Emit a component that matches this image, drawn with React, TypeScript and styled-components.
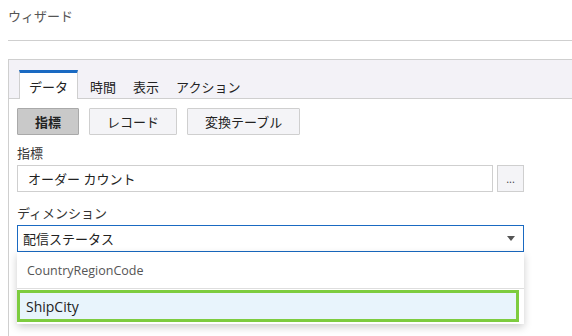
import React, { useState } from "react";
import styled, { createGlobalStyle } from "styled-components";

const GlobalStyle = createGlobalStyle`
  body {
    margin: 0;
    background: #fff;
    font-family: "Open Sans", "Noto Sans CJK JP", sans-serif;
    color: #333;
  }
`;

const Page = styled.div`
  padding: 0 0 0 8px;
  height: 336px;
  overflow: hidden;
`;

const Title = styled.div`
  height: 41px;
  padding-top: 6px;
  box-sizing: border-box;
  font-size: 13px;
  color: #555;
  border-bottom: 1px solid #cfcfcf;
`;

const Panel = styled.div`
  margin-top: 18px;
  border-top: 1px solid #cfcfcf;
  border-left: 1px solid #cfcfcf;
  height: 300px;
`;

const TabBar = styled.div`
  display: flex;
  align-items: flex-end;
  height: 38px;
  padding-left: 10px;
  background: #f3f2f7;
  border-bottom: 1px solid #cfcfcf;
`;

const Tab = styled.div<{ $active?: boolean }>`
  display: flex;
  align-items: center;
  box-sizing: border-box;
  height: 29px;
  margin-bottom: -1px;
  padding: 0 ${(p) => (p.$active ? "9px" : "7px")};
  font-size: 13px;
  color: #222;
  border-top: 3px solid ${(p) => (p.$active ? "#1a6ac2" : "transparent")};
  border-left: 1px solid ${(p) => (p.$active ? "#cfcfcf" : "transparent")};
  border-right: 1px solid ${(p) => (p.$active ? "#cfcfcf" : "transparent")};
  background: ${(p) => (p.$active ? "#fff" : "transparent")};
  margin-right: ${(p) => (p.$active ? "4px" : "1px")};
`;

const Content = styled.div`
  width: 507px;
  padding: 9px 0 0 8px;
`;

const ButtonRow = styled.div`
  display: flex;
  gap: 10px;
`;

const ToggleButton = styled.button<{ $pressed?: boolean }>`
  height: 27px;
  padding: 0 17px;
  font-family: inherit;
  font-size: 13px;
  font-weight: ${(p) => (p.$pressed ? 700 : 400)};
  color: #222;
  border: 1px solid ${(p) => (p.$pressed ? "#a9a9a9" : "#cfcfcf")};
  background: ${(p) => (p.$pressed ? "#c9c9c9" : "#f4f4f7")};
  border-radius: 1px;
`;

const Label = styled.div<{ $gap?: number }>`
  margin-top: ${(p) => p.$gap ?? 8}px;
  margin-bottom: 3px;
  font-size: 13px;
  color: #333;
`;

const FieldRow = styled.div`
  display: flex;
  gap: 4px;
`;

const TextBox = styled.div`
  flex: 1;
  height: 27px;
  box-sizing: border-box;
  display: flex;
  align-items: center;
  padding: 0 10px;
  font-size: 13px;
  color: #222;
  border: 1px solid #cfcfcf;
`;

const MoreButton = styled.button`
  width: 27px;
  height: 27px;
  font-family: inherit;
  font-size: 11px;
  color: #444;
  border: 1px solid #cfcfcf;
  background: #f4f4f7;
  padding: 0;
  line-height: 1;
`;

const SelectWrap = styled.div`
  position: relative;
`;

const SelectBox = styled.div`
  height: 27px;
  box-sizing: border-box;
  display: flex;
  align-items: center;
  justify-content: space-between;
  padding: 0 8px 0 5px;
  font-size: 13px;
  color: #222;
  border: 1px solid #1a6ac2;
`;

const Caret = styled.span`
  width: 0;
  height: 0;
  border-left: 4px solid transparent;
  border-right: 4px solid transparent;
  border-top: 5px solid #555;
`;

const Menu = styled.ul`
  position: absolute;
  top: 27px;
  left: 0;
  right: 0;
  margin: 0;
  padding: 0;
  list-style: none;
  background: #fff;
  box-shadow: 0 3px 8px rgba(0, 0, 0, 0.2);
`;

const Option = styled.li<{ $selected?: boolean }>`
  box-sizing: border-box;
  display: flex;
  align-items: center;
  height: ${(p) => (p.$selected ? "32px" : "37px")};
  padding: 0 ${(p) => (p.$selected ? "9px" : "10px")};
  font-size: ${(p) => (p.$selected ? "14px" : "12.5px")};
  color: ${(p) => (p.$selected ? "#222" : "#555")};
  background: ${(p) => (p.$selected ? "#e8f4fc" : "#fff")};
  border-bottom: ${(p) => (p.$selected ? "none" : "1px solid #dedede")};
  outline: ${(p) => (p.$selected ? "3px solid #7dcc3f" : "none")};
  outline-offset: -3px;
  margin: ${(p) => (p.$selected ? "1px 5px 2px 0" : "0")};
`;

const tabs = ["データ", "時間", "表示", "アクション"];
const modes = ["指標", "レコード", "変換テーブル"];
const options = ["CountryRegionCode", "ShipCity"];

export default function App() {
  const [tab, setTab] = useState(0);
  const [mode, setMode] = useState(0);
  const [selected] = useState(1);

  return (
    <Page>
      <GlobalStyle />
      <Title>ウィザード</Title>
      <Panel>
        <TabBar>
          {tabs.map((t, i) => (
            <Tab key={t} $active={i === tab} onClick={() => setTab(i)}>
              {t}
            </Tab>
          ))}
        </TabBar>
        <Content>
          <ButtonRow>
            {modes.map((m, i) => (
              <ToggleButton key={m} $pressed={i === mode} onClick={() => setMode(i)}>
                {m}
              </ToggleButton>
            ))}
          </ButtonRow>
          <Label>指標</Label>
          <FieldRow>
            <TextBox>オーダー カウント</TextBox>
            <MoreButton>...</MoreButton>
          </FieldRow>
          <Label $gap={11}>ディメンション</Label>
          <SelectWrap>
            <SelectBox>
              配信ステータス
              <Caret />
            </SelectBox>
            <Menu>
              {options.map((o, i) => (
                <Option key={o} $selected={i === selected}>
                  {o}
                </Option>
              ))}
            </Menu>
          </SelectWrap>
        </Content>
      </Panel>
    </Page>
  );
}
